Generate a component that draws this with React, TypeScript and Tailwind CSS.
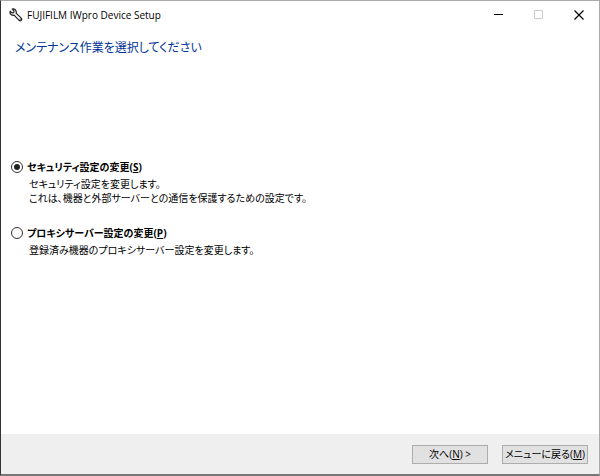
import { useState } from "react";

const options = [
  {
    id: "security",
    title: "セキュリティ設定の変更",
    accessKey: "S",
    lines: [
      "セキュリティ設定を変更します。",
      "これは、機器と外部サーバーとの通信を保護するための設定です。",
    ],
  },
  {
    id: "proxy",
    title: "プロキシサーバー設定の変更",
    accessKey: "P",
    lines: ["登録済み機器のプロキシサーバー設定を変更します。"],
  },
];

const TitleBar = () => {
  return (
    <header className="flex h-7 items-center justify-between pl-2">
      <div className="flex items-center gap-1">
        <svg width="14" height="14" viewBox="0 0 14 14" fill="none" stroke="#222" strokeWidth="1.2" strokeLinejoin="round">
          <path d="M3.2 1.1 5 2.9 4.7 4.6 3 4.9 1.2 3.1C.7 4.7 1.3 6.2 2.6 6.9c.8.4 1.7.5 2.5.2l5 5.2c.6.7 1.6.7 2.2.1.6-.6.6-1.6-.1-2.2L7.1 5.1c.3-.9.2-1.8-.2-2.5C6.2 1.3 4.8.7 3.2 1.1Z" />
          <path d="M11.2 11.2h.1" strokeLinecap="round" />
        </svg>
        <h1>FUJIFILM IWpro Device Setup</h1>
      </div>
      <div className="flex">
        <button type="button" aria-label="最小化" className="flex h-7 w-10 items-center justify-center">
          <svg width="10" height="10" viewBox="0 0 10 10" stroke="#000">
            <path d="M0 4.5h9" />
          </svg>
        </button>
        <button type="button" aria-label="最大化" disabled className="flex h-7 w-10 items-center justify-center">
          <svg width="10" height="10" viewBox="0 0 10 10" fill="none" stroke="#ccc">
            <path d="M.5.5h8v8h-8z" />
          </svg>
        </button>
        <button type="button" aria-label="閉じる" className="flex h-7 w-10 items-center justify-center">
          <svg width="10" height="10" viewBox="0 0 10 10" stroke="#000" strokeWidth="1.2">
            <path d="m.5.5 9 9M9.5.5l-9 9" />
          </svg>
        </button>
      </div>
    </header>
  );
};

const App = () => {
  const [selected, setSelected] = useState("security");

  return (
    <div className="flex min-h-screen flex-col border-t border-r border-b-2 border-l border-t-[#aaa] border-r-[#aaa] border-b-[#777] border-l-[#333] bg-white font-['Open_Sans','Noto_Sans_CJK_JP',sans-serif] text-[10px] text-black [font-feature-settings:'palt']">
      <TitleBar />
      <main className="flex-1 px-1.5">
        <h2 className="px-2 pt-2 text-xs leading-[22px] text-[#003399]">
          メンテナンス作業を選択してください
        </h2>
        <div className="flex flex-col gap-[18px] pt-[98px]">
          {options.map((option) => (
            <div key={option.id} className="flex items-start">
              <input
                type="radio"
                id={option.id}
                name="task"
                checked={selected === option.id}
                onChange={() => setSelected(option.id)}
                className="m-1 size-3 shrink-0 appearance-none rounded-full border border-[#333] bg-white p-0.5 checked:bg-[#222] checked:bg-clip-content"
              />
              <div>
                <label htmlFor={option.id} className="block font-bold leading-5">
                  {option.title}(<u>{option.accessKey}</u>)
                </label>
                <div className="px-0.5 leading-[14px]">
                  {option.lines.map((line) => (
                    <p key={line}>{line}</p>
                  ))}
                </div>
              </div>
            </div>
          ))}
        </div>
      </main>
      <footer className="flex h-10 items-center justify-end gap-3.5 bg-[#efefef] px-[11px]">
        <button type="button" className="h-[19px] w-[76px] whitespace-nowrap border border-[#adadad] bg-[#e1e1e1] leading-4">
          次へ(<u>N</u>) &gt;
        </button>
        <button type="button" className="h-[19px] w-[86px] whitespace-nowrap border border-[#adadad] bg-[#e1e1e1] leading-4">
          メニューに戻る(<u>M</u>)
        </button>
      </footer>
    </div>
  );
};

export default App;
